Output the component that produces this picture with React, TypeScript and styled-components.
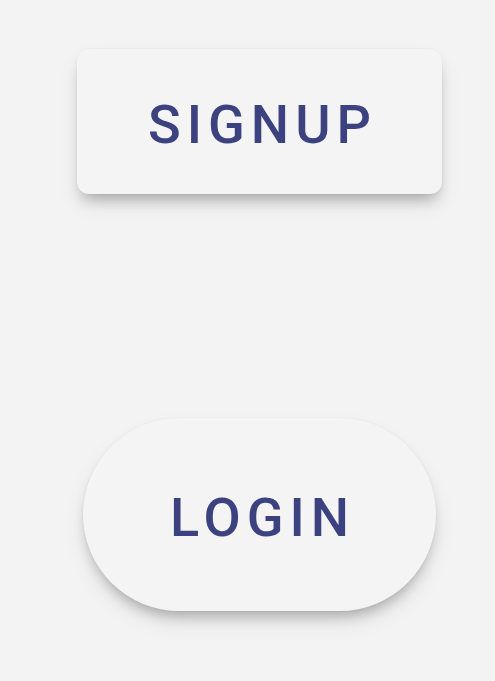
import React from "react";
import styled, { createGlobalStyle } from "styled-components";

const GlobalStyle = createGlobalStyle`
  html, body {
    margin: 0;
    padding: 0;
    background: #f3f3f3;
  }
`;

const Page = styled.div`
  display: flex;
  flex-direction: column;
  padding: 49px 0 60px;
  gap: 224px;
  font-family: Roboto, "Liberation Sans", sans-serif;
`;

const ActionButton = styled.button<{ $pill?: boolean }>`
  display: flex;
  align-items: center;
  justify-content: center;
  box-sizing: border-box;
  margin-left: ${(p) => (p.$pill ? "83px" : "77px")};
  width: ${(p) => (p.$pill ? "353px" : "365px")};
  height: ${(p) => (p.$pill ? "193px" : "145px")};
  border: none;
  border-radius: ${(p) => (p.$pill ? "97px" : "12px")};
  background: #f4f4f4;
  box-shadow: 0 10px 14px -5px rgba(0, 0, 0, 0.26),
    0 12px 24px -2px rgba(0, 0, 0, 0.08), 0 0 3px rgba(0, 0, 0, 0.05);
  color: #3c4280;
  font-family: inherit;
  font-size: 54px;
  font-weight: 500;
  letter-spacing: 6px;
  text-transform: uppercase;
  padding: 5px 0 0 6px;
  cursor: pointer;
`;

const App = () => {
  return (
    <>
      <GlobalStyle />
      <Page>
        <ActionButton>Signup</ActionButton>
        <ActionButton $pill>Login</ActionButton>
      </Page>
    </>
  );
};

export default App;
